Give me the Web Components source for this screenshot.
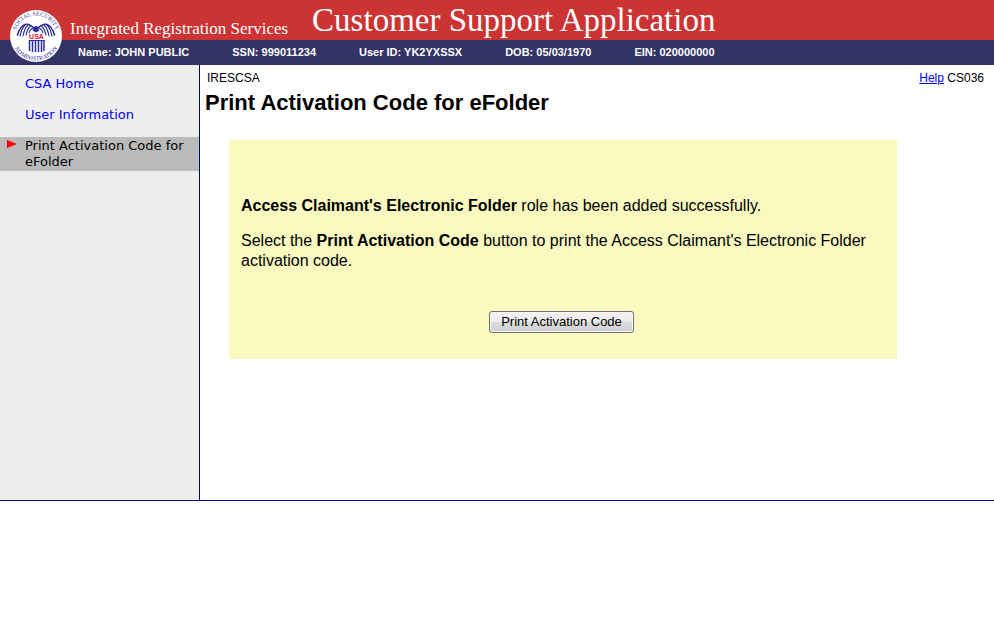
<!DOCTYPE html>
<html lang="en">
<head>
<meta charset="utf-8">
<title>Customer Support Application</title>
<style>
  body {
    margin: 0;
    background: #fff;
    color: #000;
    font-family: "Liberation Sans", Arial, sans-serif;
  }
</style>
</head>
<body>

<csa-header>
  <span slot="service">Integrated Registration Services</span>
  <span slot="title">Customer Support Application</span>
  <span slot="user">Name: JOHN PUBLIC</span>
  <span slot="user">SSN: 999011234</span>
  <span slot="user">User ID: YK2YXSSX</span>
  <span slot="user">DOB: 05/03/1970</span>
  <span slot="user">EIN: 020000000</span>
</csa-header>

<csa-layout>
  <csa-nav slot="nav">
    <csa-nav-item href="#home">CSA Home</csa-nav-item>
    <csa-nav-item href="#user">User Information</csa-nav-item>
    <csa-nav-item current>Print Activation Code for eFolder</csa-nav-item>
  </csa-nav>

  <csa-page system="IRESCSA" screen="CS036">
    <span slot="title">Print Activation Code for eFolder</span>
    <csa-message>
      <p><b>Access Claimant's Electronic Folder</b> role has been added successfully.</p>
      <p>Select the <b>Print Activation Code</b> button to print the Access Claimant's Electronic Folder activation code.</p>
      <csa-button slot="action">Print Activation Code</csa-button>
    </csa-message>
  </csa-page>
</csa-layout>

<script>
class CsaSeal extends HTMLElement {
  constructor() {
    super();
    this.attachShadow({ mode: 'open' });

    this.shadowRoot.innerHTML = `
      <style>
        :host { display: block; width: 52px; height: 52px; }
        svg { display: block; width: 100%; height: 100%; }
        text { font-family: "Liberation Serif", Georgia, serif; font-size: 6px; fill: #3333a0; }
        .usa { font-family: "Liberation Sans", Arial, sans-serif; font-size: 7px; font-weight: bold; fill: #d8143c; }
      </style>
      <svg viewBox="0 0 52 52" role="img" aria-label="Social Security Administration seal">
        <defs>
          <path id="upper" d="M5.500 26 A20.500 20.500 0 0 1 46.500 26"/>
          <path id="lower" d="M1.500 26 A24.500 24.500 0 0 0 50.500 26"/>
        </defs>
        <circle cx="26" cy="26" r="26" fill="#fff"/>
        <text><textPath href="#upper" startOffset="50%" text-anchor="middle">SOCIAL SECURITY</textPath></text>
        <text><textPath href="#lower" startOffset="50%" text-anchor="middle">ADMINISTRATION</textPath></text>
        <g fill="none" stroke="#2c2c9c" stroke-width="1.1" stroke-linecap="round">
          <path stroke-width="1.6" d="M25 19 C22 16 18 13.5 15 14.5 C11 16 9 20 7.5 25"/>
          <path d="M15 15 C12 18 11 22 10 26 M17.500 15.500 C15 18 14 21 13 26 M20 16.500 C18 18.500 17 21 16 25 M22.500 18 C20.500 19.500 19.500 21 19 23"/>
          <path stroke-width="1.6" d="M27 19 C30 16 34 13.5 37 14.5 C41 16 43 20 44.5 25"/>
          <path d="M37 15 C40 18 41 22 42 26 M34.500 15.500 C37 18 38 21 39 26 M32 16.500 C34 18.500 35 21 36 25 M29.500 18 C31.500 19.500 32.500 21 33 23"/>
        </g>
        <path fill="#2c2c9c" d="M23.500 17.500 L25.500 16 L29 17 L28 18.500 L29.500 20.500 L26 22.500 L22.500 20.500 Z"/>
        <rect x="18.500" y="23.500" width="16" height="6" fill="#fff"/>
        <path fill="none" stroke="#2c2c9c" stroke-width="1.500" d="M19.500 30 V41 M22.500 30 V42 M25.500 30 V42 M28.500 30 V42 M31.500 30 V42 M34 30 V41"/>
        <path fill="none" stroke="#2c2c9c" stroke-width="1" d="M19 30.500 H34.500"/>
        <text class="usa" x="26.500" y="29" text-anchor="middle">USA</text>
      </svg>
    `;
  }
}
customElements.define('csa-seal', CsaSeal);

class CsaHeader extends HTMLElement {
  constructor() {
    super();
    this.attachShadow({ mode: 'open' });

    this.shadowRoot.innerHTML = `
      <style>
        :host { display: block; position: relative; color: #fff; }
        csa-seal { position: absolute; left: 10px; top: 10px; }
        .banner {
          display: flex;
          align-items: flex-start;
          gap: 24px;
          height: 40px;
          padding-left: 70px;
          background: #cc3333;
          font-family: "Liberation Serif", Georgia, serif;
          white-space: nowrap;
        }
        .service { font-size: 17px; line-height: 20px; padding-top: 19px; }
        .title { font-size: 33px; line-height: 40px; }
        .user {
          display: flex;
          align-items: center;
          gap: 43px;
          height: 24px;
          padding: 0 0 1px 78px;
          background: #333366;
          font-size: 11px;
          font-weight: bold;
          line-height: 14px;
          white-space: nowrap;
        }
      </style>
      <header>
        <div class="banner">
          <div class="service"><slot name="service"></slot></div>
          <div class="title"><slot name="title"></slot></div>
        </div>
        <div class="user"><slot name="user"></slot></div>
        <csa-seal></csa-seal>
      </header>
    `;
  }
}
customElements.define('csa-header', CsaHeader);

class CsaLayout extends HTMLElement {
  constructor() {
    super();
    this.attachShadow({ mode: 'open' });

    this.shadowRoot.innerHTML = `
      <style>
        :host {
          display: grid;
          grid-template-columns: 200px 1fr;
          min-height: 435px;
          border-bottom: 1px solid #000080;
        }
      </style>
      <slot name="nav"></slot>
      <slot></slot>
    `;
  }
}
customElements.define('csa-layout', CsaLayout);

class CsaNav extends HTMLElement {
  constructor() {
    super();
    this.attachShadow({ mode: 'open' });

    this.shadowRoot.innerHTML = `
      <style>
        :host {
          display: block;
          background: #eeeeee;
          border-right: 1px solid #000080;
        }
        nav {
          display: flex;
          flex-direction: column;
          gap: 13px;
          padding-top: 10px;
        }
      </style>
      <nav><slot></slot></nav>
    `;
  }
}
customElements.define('csa-nav', CsaNav);

class CsaNavItem extends HTMLElement {
  constructor() {
    super();
    this.attachShadow({ mode: 'open' });
    const current = this.hasAttribute('current');

    this.shadowRoot.innerHTML = `
      <style>
        :host {
          display: grid;
          grid-template-columns: 10px 1fr;
          gap: 8px;
          padding: 1px 7px;
          font-family: "DejaVu Sans", Verdana, sans-serif;
          font-size: 13px;
          line-height: 16px;
        }
        :host([current]) { background: #bbbbbb; }
        a { grid-column: 2; color: #0000ff; text-decoration: none; }
        a:hover { text-decoration: underline; }
        svg { width: 10px; height: 8px; margin-top: 2px; }
      </style>
      ${current
        ? '<svg viewBox="0 0 10 8" aria-hidden="true"><path d="M0 0 L10 4 L0 8 Z" fill="#ff0000"/></svg><span><slot></slot></span>'
        : `<a href="${this.getAttribute('href')}"><slot></slot></a>`}
    `;
  }
}
customElements.define('csa-nav-item', CsaNavItem);

class CsaPage extends HTMLElement {
  constructor() {
    super();
    this.attachShadow({ mode: 'open' });

    this.shadowRoot.innerHTML = `
      <style>
        :host { display: block; }
        .top {
          display: flex;
          justify-content: space-between;
          padding: 5px 10px 0 7px;
          font-size: 12px;
          line-height: 16px;
        }
        a { color: #0000ff; }
        h1 {
          margin: 0 5px 21px;
          font-size: 22px;
          line-height: 33px;
        }
        .body { margin: 0 97px 0 29px; }
      </style>
      <main>
        <div class="top">
          <span>${this.getAttribute('system')}</span>
          <span><a href="#help">Help</a> ${this.getAttribute('screen')}</span>
        </div>
        <h1><slot name="title"></slot></h1>
        <div class="body"><slot></slot></div>
      </main>
    `;
  }
}
customElements.define('csa-page', CsaPage);

class CsaMessage extends HTMLElement {
  constructor() {
    super();
    this.attachShadow({ mode: 'open' });

    this.shadowRoot.innerHTML = `
      <style>
        :host {
          display: block;
          padding: 56px 15px 26px 12px;
          background: #f9f9c0;
          font-size: 16px;
          line-height: 20px;
        }
        ::slotted(p) { margin: 0 0 15px; }
        .action { display: flex; justify-content: center; margin-top: 40px; }
      </style>
      <slot></slot>
      <div class="action"><slot name="action"></slot></div>
    `;
  }
}
customElements.define('csa-message', CsaMessage);

class CsaButton extends HTMLElement {
  constructor() {
    super();
    this.attachShadow({ mode: 'open' });

    this.shadowRoot.innerHTML = `
      <style>
        :host { display: block; }
        button {
          display: block;
          height: 22px;
          padding: 0 11px;
          border: 1px solid #707070;
          border-radius: 3px;
          background: linear-gradient(#f2f2f2, #ebebeb 50%, #dddddd 50%, #cfcfcf);
          box-shadow: inset 0 0 0 1px #fafafa;
          color: #000;
          font: 13px/18px "Liberation Sans", Arial, sans-serif;
        }
      </style>
      <button type="button"><slot></slot></button>
    `;
  }
}
customElements.define('csa-button', CsaButton);
</script>
</body>
</html>
